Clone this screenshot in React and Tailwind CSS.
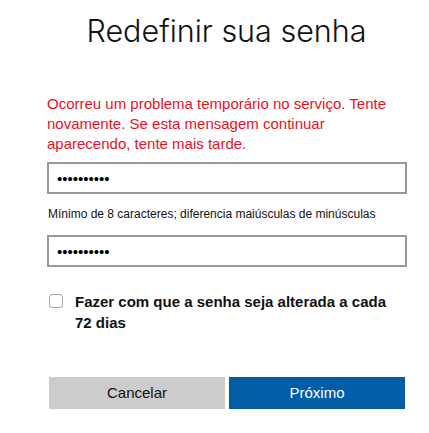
import React from "react";

export default function App() {
  return (
    <div className="w-[429px] h-[433px] bg-white" style={{ fontFamily: '"Liberation Sans", Arial, sans-serif' }}>
      <div className="pt-[11px] flex justify-center">
        <h1 className="text-[30.5px] leading-[40px] font-light text-[#111] pl-[24px]" style={{ fontFamily: 'Inter, "Liberation Sans", sans-serif', fontWeight: 300 }}>
          Redefinir sua senha
        </h1>
      </div>
      <div className="ml-[47px] w-[360px]">
        <p className="mt-[43px] text-[15px] leading-[20px] text-[#e81123]">
          Ocorreu um problema temporário no serviço. Tente novamente. Se esta mensagem continuar aparecendo, tente mais tarde.
        </p>
        <input
          type="password"
          defaultValue="1234567890"
          readOnly
          className="mt-[8px] block w-[360px] h-[32px] border-2 border-[#999999] px-[8px] text-[15px] text-black outline-none"
        />
        <p className="mt-[12px] text-[12px] leading-[16px] text-[#111] pl-[1px]">
          Mínimo de 8 caracteres; diferencia maiúsculas de minúsculas
        </p>
        <input
          type="password"
          defaultValue="1234567890"
          readOnly
          className="mt-[13px] block w-[360px] h-[32px] border-2 border-[#999999] px-[8px] text-[15px] text-black outline-none"
        />
        <div className="mt-[24px] ml-[2px] flex items-start">
          <div className="mt-[3px] w-[14px] h-[14px] shrink-0 rounded-[3px] border border-[#a6a6a6] bg-white" />
          <span className="ml-[12px] w-[326px] text-[15px] leading-[21px] font-bold text-[#111]">
            Fazer com que a senha seja alterada a cada 72 dias
          </span>
        </div>
        <div className="mt-[44px] mx-[2px] flex gap-[4px]">
          <button className="flex-1 h-[32px] bg-[#cccccc] text-[15px] text-[#111]">Cancelar</button>
          <button className="flex-1 h-[32px] bg-[#005da6] text-[15px] text-white">Próximo</button>
        </div>
      </div>
    </div>
  );
}
